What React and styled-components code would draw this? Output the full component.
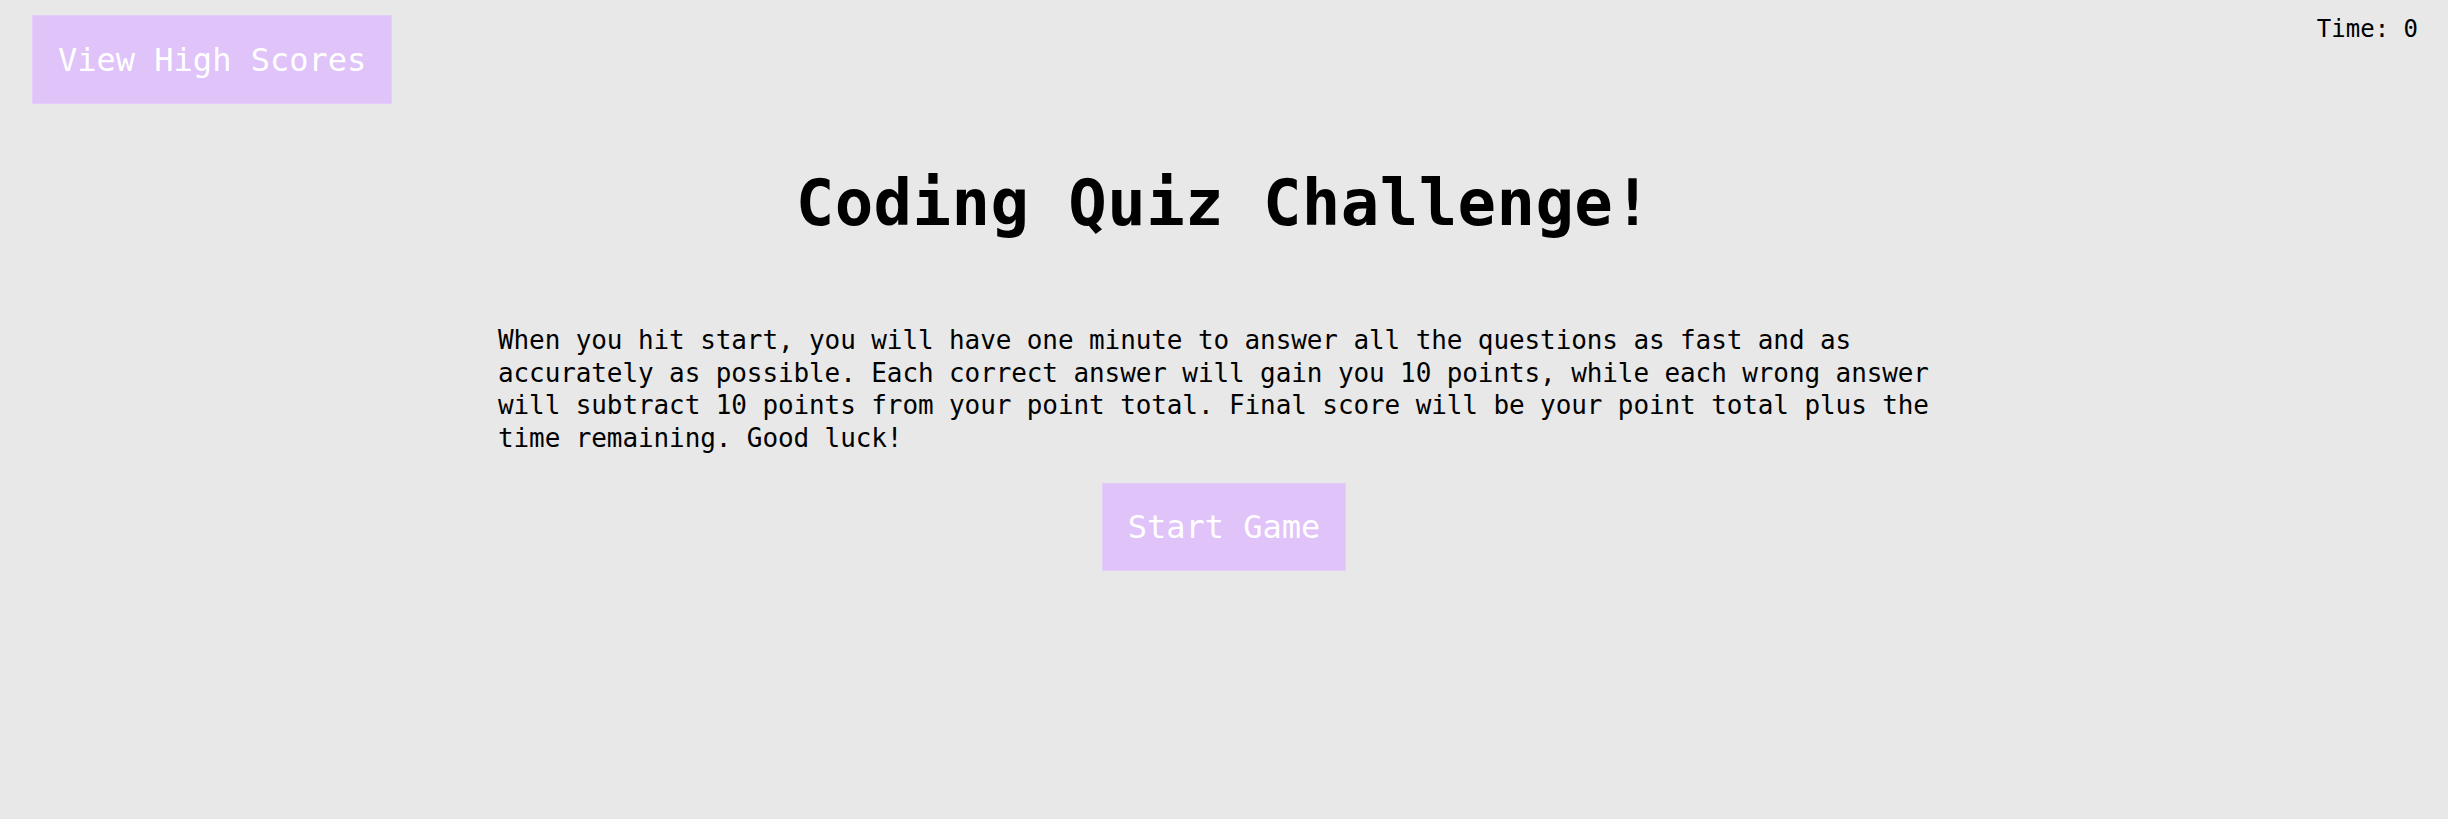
import React, { useState } from 'react';
import styled, { createGlobalStyle } from 'styled-components';

const GlobalStyle = createGlobalStyle`
  html, body {
    margin: 0;
    padding: 0;
    background: #e8e8e8;
  }
  body {
    font-family: "DejaVu Sans Mono", "Liberation Mono", monospace;
    color: #000;
  }
`;

const Page = styled.div`
  min-height: 819px;
  display: flex;
  flex-direction: column;
`;

const Header = styled.header`
  display: flex;
  justify-content: space-between;
  align-items: flex-start;
  padding: 15px 30px 0 32px;
`;

const Button = styled.button`
  font-family: inherit;
  font-size: 32px;
  color: #fff;
  background: #dfc3f9;
  border: 1px solid #e4cdfa;
  height: ${(p) => p.$height}px;
  padding: 0 25px;
  cursor: pointer;
  box-sizing: border-box;
`;

const Timer = styled.div`
  font-size: 24px;
  line-height: 28px;
  margin-top: 0;
`;

const Main = styled.main`
  display: flex;
  flex-direction: column;
  align-items: center;
`;

const Title = styled.h1`
  margin: 61px 0 0;
  font-size: 64px;
  line-height: 77px;
  font-weight: 700;
  letter-spacing: 0.4px;
`;

const Intro = styled.p`
  width: 1452px;
  margin: 82px 0 0;
  font-size: 26px;
  line-height: 32.7px;
  letter-spacing: -0.1px;
`;

const StartWrap = styled.div`
  margin-top: 28px;
`;

export default function App() {
  const [time] = useState(0);

  return (
    <Page>
      <GlobalStyle />
      <Header>
        <Button $height={89}>View High Scores</Button>
        <Timer>Time: {time}</Timer>
      </Header>
      <Main>
        <Title>Coding Quiz Challenge!</Title>
        <Intro>
          When you hit start, you will have one minute to answer all the
          questions as fast and as accurately as possible. Each correct answer
          will gain you 10 points, while each wrong answer will subtract 10
          points from your point total. Final score will be your point total
          plus the time remaining. Good luck!
        </Intro>
        <StartWrap>
          <Button $height={88}>Start Game</Button>
        </StartWrap>
      </Main>
    </Page>
  );
}
